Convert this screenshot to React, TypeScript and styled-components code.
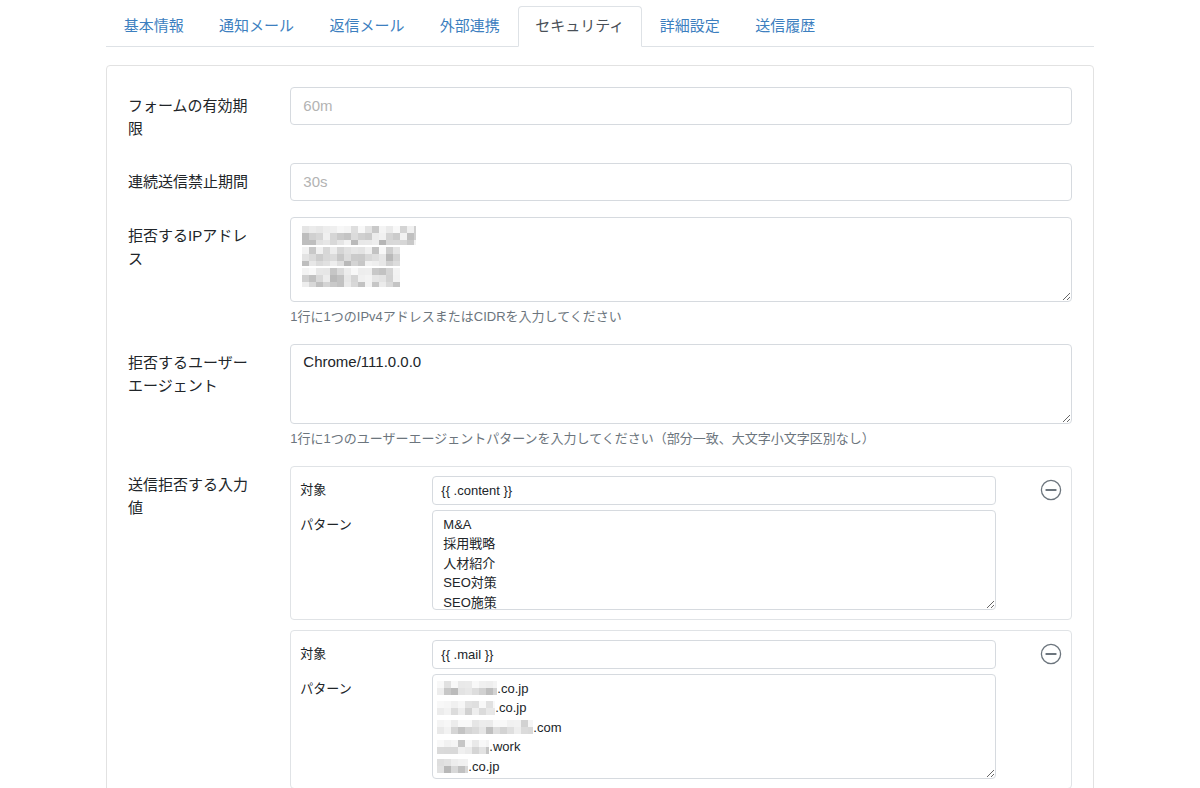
import React from 'react';
import styled, { createGlobalStyle } from 'styled-components';

const Global = createGlobalStyle`
  html, body { margin: 0; padding: 0; background: #fff; }
  body {
    font-family: "Liberation Sans", "Noto Sans CJK JP", sans-serif;
    font-size: 15px;
    line-height: 1.5;
    color: #212529;
    overflow: hidden;
  }
  * { box-sizing: border-box; }
`;

const Page = styled.div`
  width: 988px;
  margin: 0 auto;
  padding-top: 6px;
`;

const Tabs = styled.ul`
  display: flex;
  list-style: none;
  margin: 0;
  padding: 0;
  border-bottom: 1px solid #dee2e6;
`;

const Tab = styled.li<{ $active?: boolean }>`
  margin-bottom: -1px;
  padding: 8px 16.7px;
  line-height: 22.5px;
  border: 1px solid transparent;
  border-radius: 4px 4px 0 0;
  color: ${(p) => (p.$active ? '#495057' : '#3d7fbf')};
  background: ${(p) => (p.$active ? '#fff' : 'transparent')};
  border-color: ${(p) => (p.$active ? '#dee2e6 #dee2e6 #fff' : 'transparent')};
  white-space: nowrap;
`;

const Card = styled.div`
  margin-top: 18px;
  border: 1px solid #e2e2e2;
  border-radius: 4px;
  padding: 21px 21px 0;
  height: 760px;
`;

const FormRow = styled.div`
  display: grid;
  grid-template-columns: 132.33px 1fr;
  column-gap: 30px;
  margin-bottom: 16px;
`;

const Label = styled.div`
  padding: 7px 0;
  line-height: 23px;
  color: #212529;
`;

const Field = styled.div`
  display: flex;
  flex-direction: column;
  min-width: 0;
`;

const Input = styled.input`
  height: 38px;
  padding: 6px 12px;
  font: inherit;
  font-size: 15px;
  color: #495057;
  border: 1px solid #d6dadf;
  border-radius: 4px;
  outline: none;
  &::placeholder { color: #b3b3b3; }
`;

const TextareaWrap = styled.div`
  position: relative;
  display: flex;
`;

const Textarea = styled.textarea<{ $h: number }>`
  width: 100%;
  height: ${(p) => p.$h}px;
  padding: 6px 12px;
  font: inherit;
  font-size: 15px;
  line-height: 22.5px;
  color: #212529;
  border: 1px solid #d6dadf;
  border-radius: 4px;
  resize: vertical;
  outline: none;
  overflow: hidden;
  display: block;
`;

const Help = styled.div`
  margin-top: 3px;
  font-size: 13px;
  line-height: 23px;
  color: #6c757d;
`;

const SubCard = styled.div`
  border: 1px solid #e0e3e6;
  border-radius: 4px;
  padding: 9px;
  margin-bottom: 10px;
  display: grid;
  grid-template-columns: 102px 1fr 36px;
  column-gap: 30px;
  row-gap: 5px;
  align-items: start;
`;

const SubLabel = styled.div<{ $pt: number }>`
  font-size: 13px;
  line-height: 19.5px;
  padding-top: ${(p) => p.$pt}px;
  color: #212529;
`;

const SmallInput = styled.input`
  height: 29px;
  padding: 4px 8px;
  font: inherit;
  font-size: 13px;
  color: #212529;
  border: 1px solid #d6dadf;
  border-radius: 4px;
  outline: none;
  width: 100%;
`;

const SmallTextarea = styled.textarea<{ $h: number }>`
  width: 100%;
  height: ${(p) => p.$h}px;
  padding: 4px 10px;
  font: inherit;
  font-size: 13px;
  line-height: 19.5px;
  color: #212529;
  border: 1px solid #d6dadf;
  border-radius: 4px;
  resize: vertical;
  outline: none;
  overflow: hidden;
  display: block;
`;

const Overlay = styled.div<{ $pad: string; $lh: number }>`
  position: absolute;
  inset: 0;
  padding: ${(p) => p.$pad};
  pointer-events: none;
  display: flex;
  flex-direction: column;
  font-size: 13px;
  line-height: ${(p) => p.$lh}px;
  color: #212529;
`;

const MaskLine = styled.div<{ $h: number }>`
  display: flex;
  align-items: center;
  height: ${(p) => p.$h}px;
  white-space: nowrap;
`;

const RemoveButton = styled.button`
  justify-self: end;
  align-self: center;
  padding: 0;
  border: 0;
  background: none;
  width: 22px;
  height: 22px;
  display: flex;
  color: #6c757d;
`;

function rand(seed: number) {
  let s = seed;
  return () => {
    s = (s * 9301 + 49297) % 233280;
    return s / 233280;
  };
}

function Mosaic({ width, height, seed, cell = 7, dark = 0.3 }: { width: number; height: number; seed: number; cell?: number; dark?: number }) {
  const r = rand(seed);
  const cols = Math.ceil(width / cell);
  const rows = Math.ceil(height / cell);
  const rects: React.ReactNode[] = [];
  for (let y = 0; y < rows; y++) {
    for (let x = 0; x < cols; x++) {
      const v = r();
      let g: number;
      if (v < dark) g = 180 + Math.floor(r() * 25);
      else g = 208 + Math.floor(r() * 36);
      if (y === 0 && rows > 1) g = Math.min(248, g + 14);
      rects.push(<rect key={`${x}-${y}`} x={x * cell} y={y * cell} width={cell} height={cell} fill={`rgb(${g},${g},${g})`} />);
    }
  }
  return (
    <svg width={width} height={height} viewBox={`0 0 ${width} ${height}`} style={{ display: 'block', flex: 'none' }}>
      {rects}
    </svg>
  );
}

function MinusCircle() {
  return (
    <svg width="22" height="22" viewBox="0 0 22 22" fill="none">
      <circle cx="11" cy="11" r="9.6" stroke="#6c757d" strokeWidth="1.3" />
      <line x1="6.3" y1="11" x2="15.7" y2="11" stroke="#6c757d" strokeWidth="2" strokeLinecap="round" />
    </svg>
  );
}

const tabs = ['基本情報', '通知メール', '返信メール', '外部連携', 'セキュリティ', '詳細設定', '送信履歴'];

const mailLines = [
  { w: 60, seed: 11, text: '.co.jp' },
  { w: 58, seed: 23, text: '.co.jp' },
  { w: 96, seed: 37, text: '.com' },
  { w: 52, seed: 41, text: '.work' },
  { w: 31, seed: 53, text: '.co.jp' },
];

export default function App() {
  return (
    <>
      <Global />
      <Page>
        <Tabs>
          {tabs.map((t) => (
            <Tab key={t} $active={t === 'セキュリティ'}>{t}</Tab>
          ))}
        </Tabs>
        <Card>
          <FormRow>
            <Label>フォームの有効期限</Label>
            <Field>
              <Input placeholder="60m" />
            </Field>
          </FormRow>
          <FormRow>
            <Label>連続送信禁止期間</Label>
            <Field>
              <Input placeholder="30s" />
            </Field>
          </FormRow>
          <FormRow>
            <Label>拒否するIPアドレス</Label>
            <Field>
              <TextareaWrap>
                <Textarea $h={85} defaultValue="" />
                <Overlay $pad="8px 12px" $lh={21}>
                  <MaskLine $h={21}><Mosaic width={114} height={19} seed={3} /></MaskLine>
                  <MaskLine $h={21}><Mosaic width={98} height={19} seed={7} /></MaskLine>
                  <MaskLine $h={21}><Mosaic width={98} height={19} seed={19} /></MaskLine>
                </Overlay>
              </TextareaWrap>
              <Help>1行に1つのIPv4アドレスまたはCIDRを入力してください</Help>
            </Field>
          </FormRow>
          <FormRow>
            <Label>拒否するユーザーエージェント</Label>
            <Field>
              <Textarea $h={80} defaultValue="Chrome/111.0.0.0" />
              <Help>1行に1つのユーザーエージェントパターンを入力してください（部分一致、大文字小文字区別なし）</Help>
            </Field>
          </FormRow>
          <FormRow>
            <Label>送信拒否する入力値</Label>
            <Field>
              <SubCard>
                <SubLabel $pt={4}>対象</SubLabel>
                <SmallInput defaultValue="{{ .content }}" />
                <RemoveButton aria-label="削除"><MinusCircle /></RemoveButton>
                <SubLabel $pt={5}>パターン</SubLabel>
                <SmallTextarea $h={100} defaultValue={'M&A\n採用戦略\n人材紹介\nSEO対策\nSEO施策\nDX推進'} />
                <span />
              </SubCard>
              <SubCard>
                <SubLabel $pt={4}>対象</SubLabel>
                <SmallInput defaultValue="{{ .mail }}" />
                <RemoveButton aria-label="削除"><MinusCircle /></RemoveButton>
                <SubLabel $pt={5}>パターン</SubLabel>
                <TextareaWrap>
                  <SmallTextarea $h={105} defaultValue="" />
                  <Overlay $pad="5px 8px 5px 5px" $lh={19.5}>
                    {mailLines.map((l) => (
                      <MaskLine key={l.seed} $h={19.5}>
                        <Mosaic width={l.w} height={14} seed={l.seed} cell={7} dark={0.12} />
                        <span>{l.text}</span>
                      </MaskLine>
                    ))}
                  </Overlay>
                </TextareaWrap>
                <span />
              </SubCard>
            </Field>
          </FormRow>
        </Card>
      </Page>
    </>
  );
}
